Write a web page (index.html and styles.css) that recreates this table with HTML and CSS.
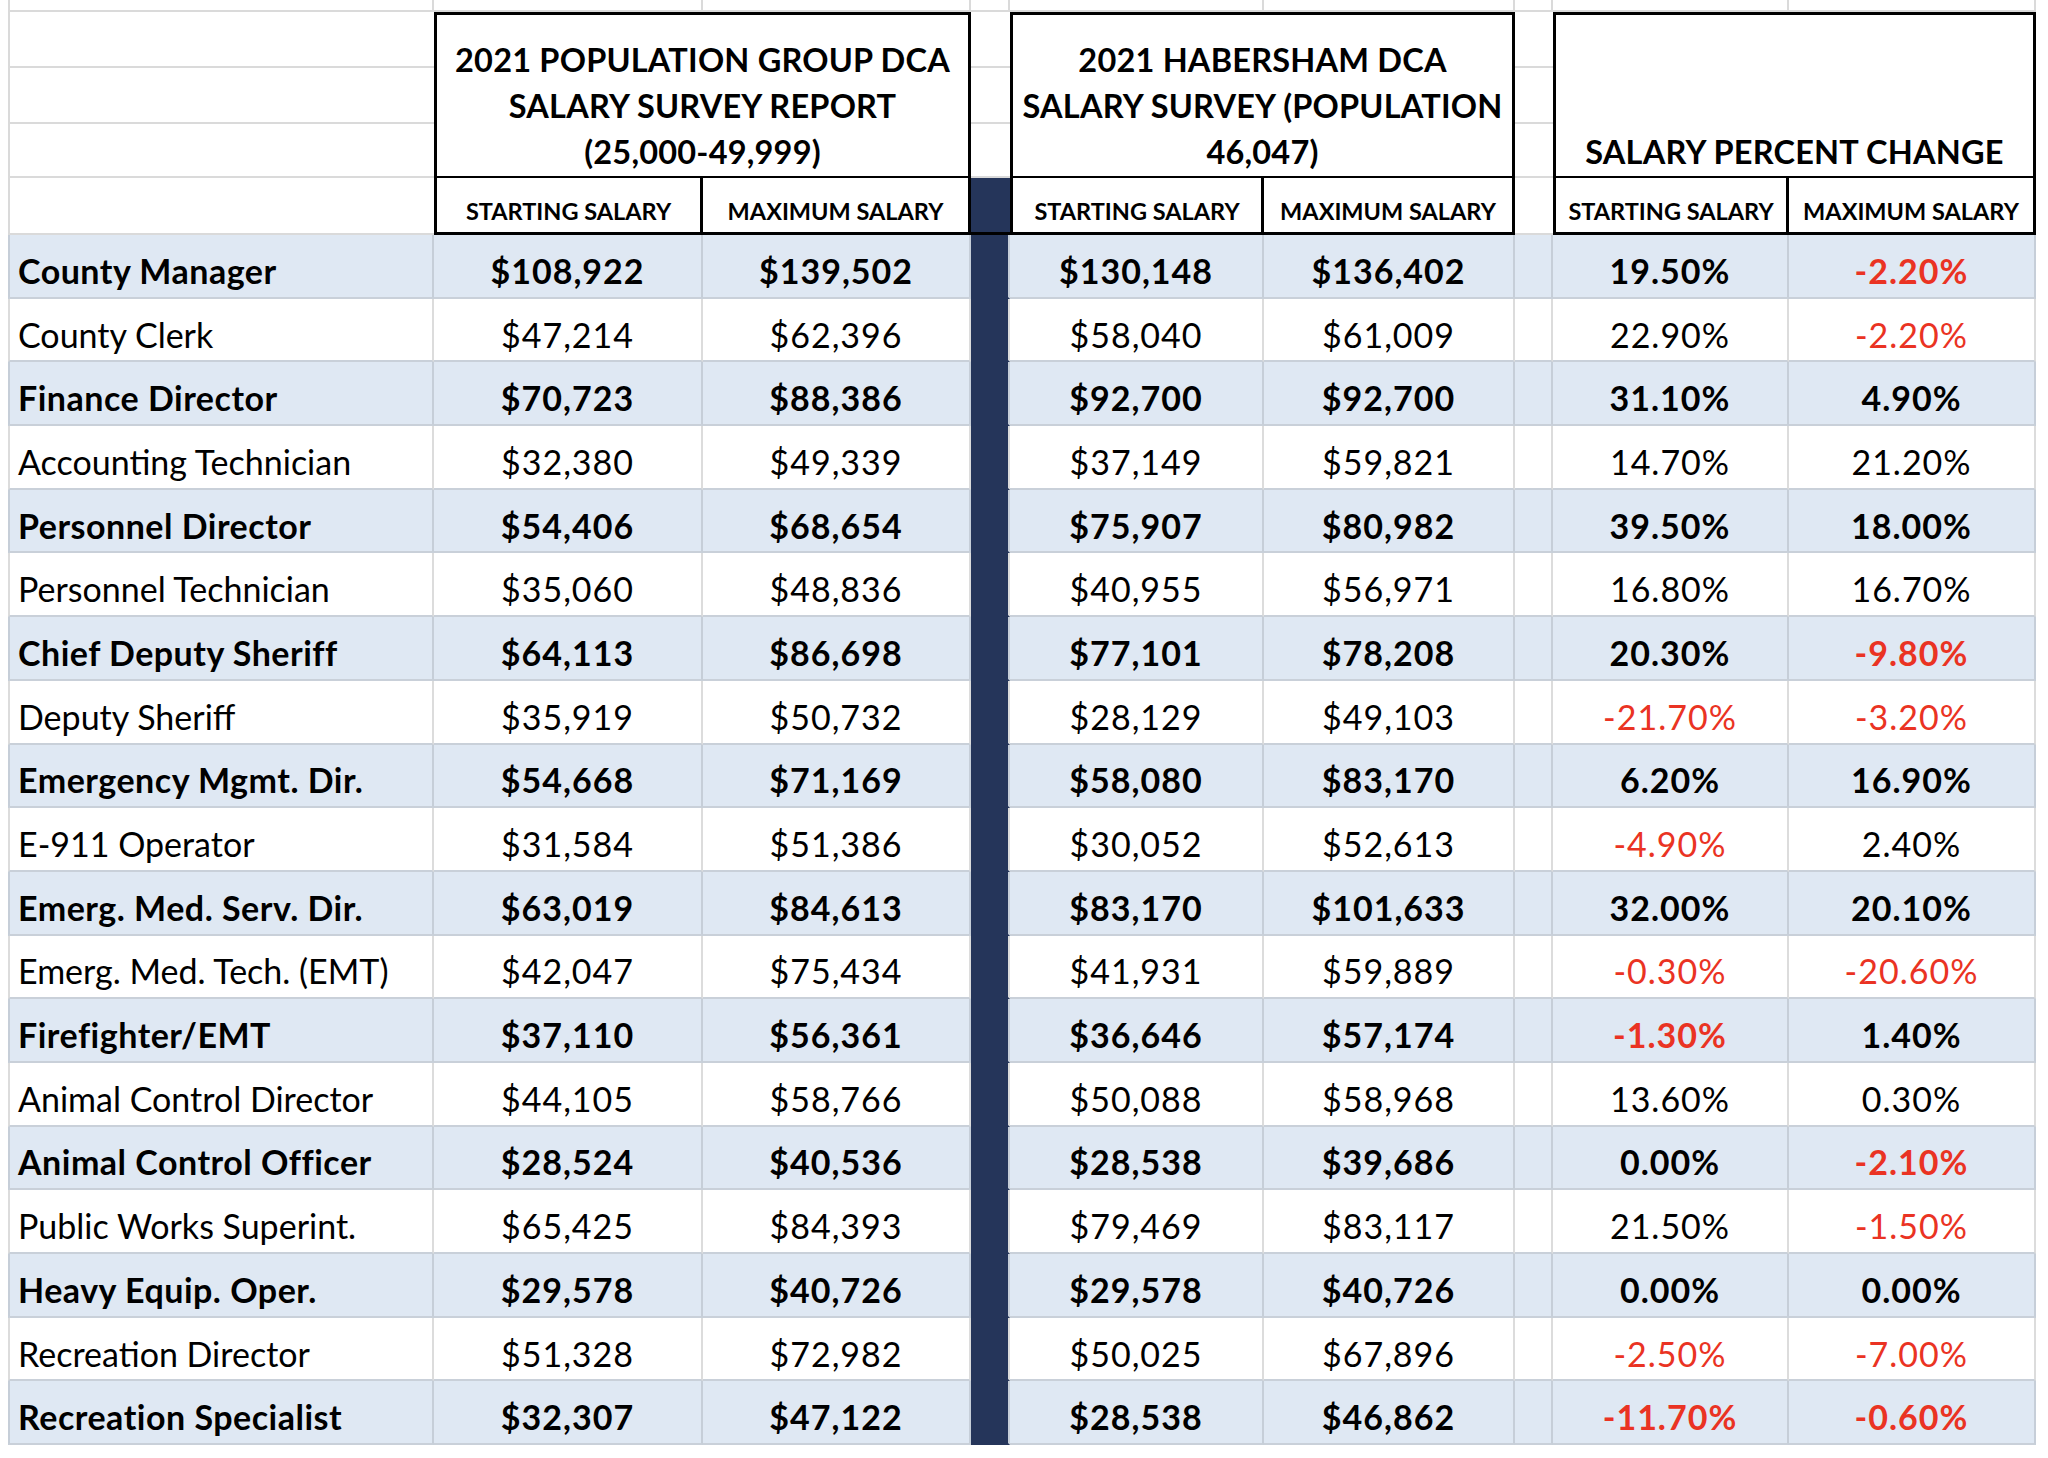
FILE: index.html
```html
<!DOCTYPE html>
<html>
<head>
<meta charset="utf-8">
<link rel="stylesheet" href="styles.css">
</head>
<body>
<div class="sheet">
  <div class="grid head">
    <div class="top first"></div><div class="top"></div><div class="top"></div><div class="top"></div><div class="top"></div><div class="top"></div><div class="top"></div><div class="top"></div><div class="top"></div>

    <div class="ha r2"></div><div class="ha r3"></div><div class="ha r4"></div><div class="ha r5"></div>
    <div class="hn r2"></div><div class="hn r3"></div><div class="hn r4"></div><div class="hn navy r5"></div>
    <div class="hg r2"></div><div class="hg r3"></div><div class="hg r4"></div><div class="hg r5"></div>

    <div class="box box1">
      <div class="line">2021 POPULATION GROUP DCA</div>
      <div class="line">SALARY SURVEY REPORT</div>
      <div class="line">(25,000-49,999)</div>
    </div>
    <div class="box box2">
      <div class="line">2021 HABERSHAM DCA</div>
      <div class="line">SALARY SURVEY (POPULATION</div>
      <div class="line">46,047)</div>
    </div>
    <div class="box box3">
      <div class="line">SALARY PERCENT CHANGE</div>
    </div>

    <div class="sub cb lead">STARTING SALARY</div>
    <div class="sub cc">MAXIMUM SALARY</div>
    <div class="sub cd lead">STARTING SALARY</div>
    <div class="sub ce">MAXIMUM SALARY</div>
    <div class="sub cf lead">STARTING SALARY</div>
    <div class="sub ch">MAXIMUM SALARY</div>
  </div>

  <div class="grid body">
    <div class="row b"><div class="name">County Manager</div><div>$108,922</div><div>$139,502</div><div class="n"></div><div>$130,148</div><div>$136,402</div><div></div><div>19.50%</div><div class="neg">-2.20%</div></div>
    <div class="row"><div class="name">County Clerk</div><div>$47,214</div><div>$62,396</div><div class="n"></div><div>$58,040</div><div>$61,009</div><div></div><div>22.90%</div><div class="neg">-2.20%</div></div>
    <div class="row b"><div class="name">Finance Director</div><div>$70,723</div><div>$88,386</div><div class="n"></div><div>$92,700</div><div>$92,700</div><div></div><div>31.10%</div><div>4.90%</div></div>
    <div class="row"><div class="name">Accounting Technician</div><div>$32,380</div><div>$49,339</div><div class="n"></div><div>$37,149</div><div>$59,821</div><div></div><div>14.70%</div><div>21.20%</div></div>
    <div class="row b"><div class="name">Personnel Director</div><div>$54,406</div><div>$68,654</div><div class="n"></div><div>$75,907</div><div>$80,982</div><div></div><div>39.50%</div><div>18.00%</div></div>
    <div class="row"><div class="name">Personnel Technician</div><div>$35,060</div><div>$48,836</div><div class="n"></div><div>$40,955</div><div>$56,971</div><div></div><div>16.80%</div><div>16.70%</div></div>
    <div class="row b"><div class="name">Chief Deputy Sheriff</div><div>$64,113</div><div>$86,698</div><div class="n"></div><div>$77,101</div><div>$78,208</div><div></div><div>20.30%</div><div class="neg">-9.80%</div></div>
    <div class="row"><div class="name">Deputy Sheriff</div><div>$35,919</div><div>$50,732</div><div class="n"></div><div>$28,129</div><div>$49,103</div><div></div><div class="neg">-21.70%</div><div class="neg">-3.20%</div></div>
    <div class="row b"><div class="name">Emergency Mgmt. Dir.</div><div>$54,668</div><div>$71,169</div><div class="n"></div><div>$58,080</div><div>$83,170</div><div></div><div>6.20%</div><div>16.90%</div></div>
    <div class="row"><div class="name">E-911 Operator</div><div>$31,584</div><div>$51,386</div><div class="n"></div><div>$30,052</div><div>$52,613</div><div></div><div class="neg">-4.90%</div><div>2.40%</div></div>
    <div class="row b"><div class="name">Emerg. Med. Serv. Dir.</div><div>$63,019</div><div>$84,613</div><div class="n"></div><div>$83,170</div><div>$101,633</div><div></div><div>32.00%</div><div>20.10%</div></div>
    <div class="row"><div class="name">Emerg. Med. Tech. (EMT)</div><div>$42,047</div><div>$75,434</div><div class="n"></div><div>$41,931</div><div>$59,889</div><div></div><div class="neg">-0.30%</div><div class="neg">-20.60%</div></div>
    <div class="row b"><div class="name">Firefighter/EMT</div><div>$37,110</div><div>$56,361</div><div class="n"></div><div>$36,646</div><div>$57,174</div><div></div><div class="neg">-1.30%</div><div>1.40%</div></div>
    <div class="row"><div class="name">Animal Control Director</div><div>$44,105</div><div>$58,766</div><div class="n"></div><div>$50,088</div><div>$58,968</div><div></div><div>13.60%</div><div>0.30%</div></div>
    <div class="row b"><div class="name">Animal Control Officer</div><div>$28,524</div><div>$40,536</div><div class="n"></div><div>$28,538</div><div>$39,686</div><div></div><div>0.00%</div><div class="neg">-2.10%</div></div>
    <div class="row"><div class="name">Public Works Superint.</div><div>$65,425</div><div>$84,393</div><div class="n"></div><div>$79,469</div><div>$83,117</div><div></div><div>21.50%</div><div class="neg">-1.50%</div></div>
    <div class="row b"><div class="name">Heavy Equip. Oper.</div><div>$29,578</div><div>$40,726</div><div class="n"></div><div>$29,578</div><div>$40,726</div><div></div><div>0.00%</div><div>0.00%</div></div>
    <div class="row"><div class="name">Recreation Director</div><div>$51,328</div><div>$72,982</div><div class="n"></div><div>$50,025</div><div>$67,896</div><div></div><div class="neg">-2.50%</div><div class="neg">-7.00%</div></div>
    <div class="row b"><div class="name">Recreation Specialist</div><div>$32,307</div><div>$47,122</div><div class="n"></div><div>$28,538</div><div>$46,862</div><div></div><div class="neg">-11.70%</div><div class="neg">-0.60%</div></div>
  </div>
</div>
</body>
</html>
```

FILE: styles.css
```css
* { box-sizing: border-box; }
html, body { margin: 0; padding: 0; background: #fff; }
body {
  width: 2048px;
  height: 1458px;
  overflow: hidden;
  font-family: Lato, "Liberation Sans", sans-serif;
  color: #000;
}
.sheet { padding-left: 8px; width: 2048px; }
.grid {
  display: grid;
  grid-template-columns: 426px 269px 268px 39px 254px 251px 38px 236px 247px;
}
.head { grid-template-rows: 12px 56px 56px 54px 57px; }

.top { grid-row: 1; border-right: 2px solid #dadada; border-bottom: 2px solid #dadada; }
.top.first { border-left: 2px solid #dadada; }

.r2 { grid-row: 2; }
.r3 { grid-row: 3; }
.r4 { grid-row: 4; }
.r5 { grid-row: 5; }

.ha { grid-column: 1; border-left: 2px solid #dadada; border-bottom: 2px solid #dadada; }
.hn { grid-column: 4; border-bottom: 2px solid #dadada; }
.hg { grid-column: 7; border-bottom: 2px solid #dadada; }
.hn.navy { background: #25355a; border-bottom: 3px solid #000; }

.box {
  grid-row: 2 / 5;
  border: 3px solid #000;
  border-bottom-width: 2px;
  background: #fff;
  display: flex;
  flex-direction: column;
  justify-content: flex-end;
  align-items: center;
  padding-bottom: 1px;
  font-weight: 700;
  font-size: 32.5px;
  letter-spacing: 0.2px;
  line-height: 46px;
  white-space: nowrap;
}
.box1 { grid-column: 2 / 4; }
.box2 { grid-column: 5 / 7; }
.box3 { grid-column: 8 / 10; }

.sub {
  grid-row: 5;
  border-right: 3px solid #000;
  border-bottom: 3px solid #000;
  display: flex;
  align-items: center;
  justify-content: center;
  padding-top: 13px;
  font-weight: 700;
  font-size: 23.5px;
  line-height: 1;
  white-space: nowrap;
  background: #fff;
}
.sub.lead { border-left: 3px solid #000; }
.cb { grid-column: 2; }
.cc { grid-column: 3; }
.cd { grid-column: 5; }
.ce { grid-column: 6; }
.cf { grid-column: 8; }
.ch { grid-column: 9; }

.body { grid-template-rows: repeat(19, 63.7px); }
.row { display: contents; }
.row > div {
  display: flex;
  align-items: center;
  justify-content: center;
  padding-top: 9px;
  font-size: 34px;
  letter-spacing: 1px;
  white-space: nowrap;
  border-right: 2px solid #dcdcdc;
  border-bottom: 2px solid #c9d0d9;
}
.row.b > div {
  background: #dfe8f3;
  font-weight: 700;
  border-right-color: #c6ced8;
}
.row > div.name {
  justify-content: flex-start;
  padding-left: 8px;
  letter-spacing: 0;
  border-left: 2px solid #dcdcdc;
}
.row.b > div.name { border-left-color: #c6ced8; letter-spacing: 0.5px; }
.row > div.n, .row.b > div.n {
  background: #25355a;
  border-bottom-color: #25355a;
}
.row > div.neg { color: #ea3323; }
```
